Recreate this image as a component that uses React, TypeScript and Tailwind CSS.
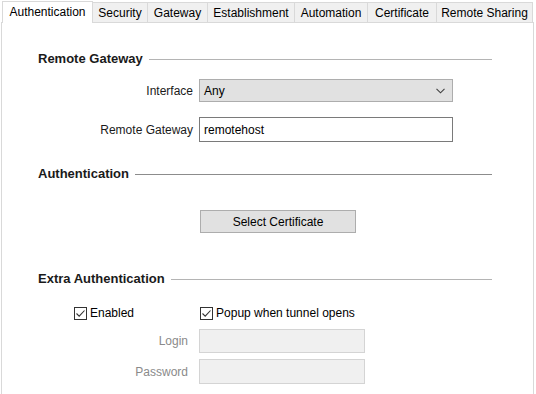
import React from "react";

const font = { fontFamily: '"Liberation Sans", Arial, sans-serif' };

function Heading({ text, lineClass }: { text: string; lineClass: string }) {
  return (
    <div className="flex items-center h-4 pl-[36px] pr-[41px]">
      <span className="font-bold text-[13px] text-[#1a1a1a] leading-4 whitespace-nowrap">{text}</span>
      <div className={`flex-1 h-px ml-[6px] ${lineClass}`} />
    </div>
  );
}

function Check() {
  return (
    <div className="w-[13px] h-[13px] border border-[#333] bg-white flex items-center justify-center">
      <svg width="11" height="11" viewBox="0 0 11 11">
        <polyline points="1.5,5.5 4.2,8.2 9.5,2.5" fill="none" stroke="#333" strokeWidth="1.1" />
      </svg>
    </div>
  );
}

const tabs: { label: string; w: string }[] = [
  { label: "Security", w: "w-[55px]" },
  { label: "Gateway", w: "w-[60px]" },
  { label: "Establishment", w: "w-[87px]" },
  { label: "Automation", w: "w-[73px]" },
  { label: "Certificate", w: "w-[69px]" },
  { label: "Remote Sharing", w: "w-[96px]" },
];

export default function App() {
  return (
    <div className="w-[536px] h-[394px] bg-white overflow-hidden text-[12px] text-black" style={font}>
      <div className="flex items-end h-[22px] pl-[2px]">
        <div className="w-[91px] h-[22px] bg-white border-t border-l border-r border-[#d9d9d9] flex items-center justify-center text-[12px] pb-[1px] relative z-10 -mb-px">
          Authentication
        </div>
        {tabs.map((t) => (
          <div
            key={t.label}
            className={`${t.w} h-[20px] bg-[#f0f0f0] border-t border-r border-[#d9d9d9] flex items-center justify-center text-[12px]`}
          >
            {t.label}
          </div>
        ))}
      </div>
      <div className="ml-px mr-[2px] h-[372px] border-l border-t border-r border-[#d9d9d9] bg-white flex flex-col">
        <div className="mt-[28px]">
          <Heading text="Remote Gateway" lineClass="bg-[#b4b4b4]" />
        </div>
        <div className="flex items-center mt-[12px]">
          <div className="w-[191px] text-right text-[#1a1a1a]">Interface</div>
          <div className="ml-[6px] w-[254px] h-[23px] bg-[#e1e1e1] border border-[#adadad] flex items-center justify-between pl-[4px] pr-[7px]">
            <span>Any</span>
            <svg width="9" height="6" viewBox="0 0 9 6">
              <polyline points="0.5,0.8 4.5,4.8 8.5,0.8" fill="none" stroke="#404040" strokeWidth="1.1" />
            </svg>
          </div>
        </div>
        <div className="flex items-center mt-[15px]">
          <div className="w-[191px] text-right text-[#1a1a1a]">Remote Gateway</div>
          <div className="ml-[6px] w-[254px] h-[25px] bg-white border border-[#7a7a7a] flex items-center pl-[4px]">
            remotehost
          </div>
        </div>
        <div className="mt-[24px]">
          <Heading text="Authentication" lineClass="bg-[#8c8c8c]" />
        </div>
        <div className="flex mt-[28px] pl-[198px]">
          <div className="w-[156px] h-[23px] bg-[#e1e1e1] border border-[#adadad] flex items-center justify-center">
            Select Certificate
          </div>
        </div>
        <div className="mt-[38px]">
          <Heading text="Extra Authentication" lineClass="bg-[#b4b4b4]" />
        </div>
        <div className="flex items-center h-4 mt-[18px]">
          <div className="ml-[72px] flex items-center">
            <Check />
            <span className="ml-[3px]">Enabled</span>
          </div>
          <div className="ml-[66px] flex items-center">
            <Check />
            <span className="ml-[3px]">Popup when tunnel opens</span>
          </div>
        </div>
        <div className="flex items-center mt-[8px]">
          <div className="w-[186px] text-right text-[#8a8a8a]">Login</div>
          <div className="ml-[11px] w-[166px] h-[24px] bg-[#f0f0f0] border border-[#d4d4d4]" />
        </div>
        <div className="flex items-center mt-[6px]">
          <div className="w-[186px] text-right text-[#8a8a8a]">Password</div>
          <div className="ml-[11px] w-[166px] h-[25px] bg-[#f0f0f0] border border-[#d4d4d4]" />
        </div>
      </div>
    </div>
  );
}
